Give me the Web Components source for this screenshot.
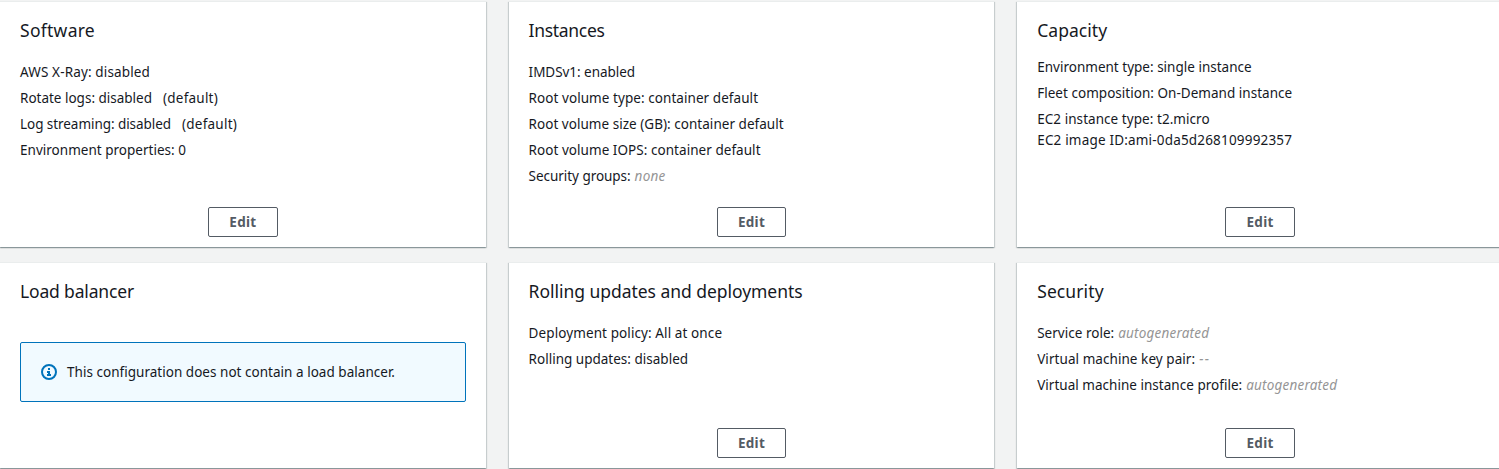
<!DOCTYPE html>
<html lang="en">
<head>
<meta charset="utf-8">
<title>Configuration</title>
<style>
html,body{margin:0;height:100%;overflow:hidden;background:#f2f3f3}
</style>
</head>
<body>
<config-overview></config-overview>
<script>
const define = (name, html, setup) => {
  const template = document.createElement('template');
  template.innerHTML = html;
  customElements.define(name, class extends HTMLElement {
    constructor() {
      super();
      this.attachShadow({ mode: 'open' }).append(template.content.cloneNode(true));
    }
    connectedCallback() { if (setup) setup(this); }
  });
};

// A single run of text whose tracking is adjusted to fill the given width.
define('fit-text', `<style>:host{display:inline-block;white-space:pre}</style><slot></slot>`, el => {
  const width = Number(el.getAttribute('w'));
  const natural = el.getBoundingClientRect().width;
  if (width && natural) el.style.letterSpacing = ((width - natural) / el.textContent.length).toFixed(3) + 'px';
});

define('config-row', `<style>
:host{display:flex;height:21px;line-height:21px;margin-bottom:5px;white-space:pre}
:host([tight]){margin-bottom:0}
::slotted([muted]){color:#959595;font-style:italic;margin-left:4px}
::slotted([note]){margin-left:11px}
</style><slot></slot>`);

define('edit-button', `<style>
:host{display:block}
button{display:block;box-sizing:border-box;width:69.6px;height:30px;margin:0;padding:0;border:1px solid #545b64;border-radius:2px;background:#fff;color:#545b64;font:700 13.5px/28px "Noto Sans","Open Sans",sans-serif;letter-spacing:.3px}
</style><button type="button"><slot></slot></button>`);

define('info-alert', `<style>
:host{display:flex;align-items:center;box-sizing:border-box;height:60px;margin-top:19px;padding:0 20px;gap:10px;border:1px solid #0073bb;border-radius:2px;background:#f1faff}
svg{display:block;flex:none}
</style>
<svg width="16" height="16" viewBox="0 0 16 16" fill="none" stroke="#0073bb" stroke-width="2"><circle cx="8" cy="8" r="7"/><path d="M8 4v2M6 8h2v3M6 11h4"/></svg>
<slot></slot>`);

define('config-card', `<style>
:host{display:flex;flex-direction:column;box-sizing:border-box;padding:15px 20px 10px;border-top:1px solid #eaeded;background:#fff;box-shadow:0 1px 1px 0 rgba(0,28,36,.22),1px 1px 1px 0 rgba(0,28,36,.14),-1px 1px 1px 0 rgba(0,28,36,.14)}
h2{margin:0;height:26px;font-size:17.5px;line-height:26px;font-weight:400}
.body{flex:1;padding-top:19px}
:host([compact]) .body{padding-top:14px}
footer{display:flex;justify-content:center}
</style>
<h2><slot name="title"></slot></h2><div class="body"><slot></slot></div><footer><slot name="action"></slot></footer>`);

define('config-overview', `<style>
:host{display:grid;grid-template-columns:repeat(3,485.8px);grid-template-rows:246px 206px;gap:15px 22.8px;padding-top:1px;font:13.5px/21px "Noto Sans","Open Sans",sans-serif;color:#16191f}
</style>
<config-card>
  <fit-text slot="title" w="75">Software</fit-text>
  <config-row><fit-text w="130">AWS X-Ray: disabled</fit-text></config-row>
  <config-row><fit-text w="132">Rotate logs: disabled</fit-text><fit-text note w="55">(default)</fit-text></config-row>
  <config-row><fit-text w="151">Log streaming: disabled</fit-text><fit-text note w="55">(default)</fit-text></config-row>
  <config-row><fit-text w="166">Environment properties: 0</fit-text></config-row>
  <edit-button slot="action">Edit</edit-button>
</config-card>
<config-card>
  <fit-text slot="title" w="76">Instances</fit-text>
  <config-row><fit-text w="106.5">IMDSv1: enabled</fit-text></config-row>
  <config-row><fit-text w="229.5">Root volume type: container default</fit-text></config-row>
  <config-row><fit-text w="255">Root volume size (GB): container default</fit-text></config-row>
  <config-row><fit-text w="232">Root volume IOPS: container default</fit-text></config-row>
  <config-row><fit-text w="102">Security groups:</fit-text><fit-text muted w="31">none</fit-text></config-row>
  <edit-button slot="action">Edit</edit-button>
</config-card>
<config-card compact>
  <fit-text slot="title" w="70">Capacity</fit-text>
  <config-row><fit-text w="214.5">Environment type: single instance</fit-text></config-row>
  <config-row><fit-text w="255">Fleet composition: On-Demand instance</fit-text></config-row>
  <config-row tight><fit-text w="172.5">EC2 instance type: t2.micro</fit-text></config-row>
  <config-row><fit-text w="255">EC2 image ID:ami-0da5d268109992357</fit-text></config-row>
  <edit-button slot="action">Edit</edit-button>
</config-card>
<config-card>
  <fit-text slot="title" w="114">Load balancer</fit-text>
  <info-alert><fit-text w="328">This configuration does not contain a load balancer.</fit-text></info-alert>
</config-card>
<config-card>
  <fit-text slot="title" w="274">Rolling updates and deployments</fit-text>
  <config-row><fit-text w="193.5">Deployment policy: All at once</fit-text></config-row>
  <config-row><fit-text w="159.5">Rolling updates: disabled</fit-text></config-row>
  <edit-button slot="action">Edit</edit-button>
</config-card>
<config-card>
  <fit-text slot="title" w="66.5">Security</fit-text>
  <config-row><fit-text w="77">Service role:</fit-text><fit-text muted w="91">autogenerated</fit-text></config-row>
  <config-row><fit-text w="158">Virtual machine key pair:</fit-text><fit-text muted w="11">--</fit-text></config-row>
  <config-row><fit-text w="205">Virtual machine instance profile:</fit-text><fit-text muted w="91">autogenerated</fit-text></config-row>
  <edit-button slot="action">Edit</edit-button>
</config-card>`);
</script>
</body>
</html>
